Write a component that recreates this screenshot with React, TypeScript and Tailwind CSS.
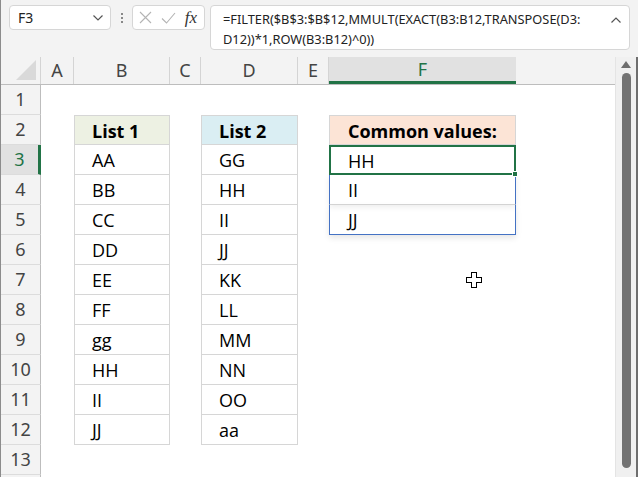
import React from 'react';

// column widths in px: row header, A..F, then spare area
const COLS = [
    { key: 'A', w: 'w-[33px]' },
    { key: 'B', w: 'w-[96px]' },
    { key: 'C', w: 'w-[31px]' },
    { key: 'D', w: 'w-[97px]' },
    { key: 'E', w: 'w-[31px]' },
    { key: 'F', w: 'w-[187px]' },
];

const LIST1 = ['AA', 'BB', 'CC', 'DD', 'EE', 'FF', 'gg', 'HH', 'II', 'JJ'];
const LIST2 = ['GG', 'HH', 'II', 'JJ', 'KK', 'LL', 'MM', 'NN', 'OO', 'aa'];
const COMMON = ['HH', 'II', 'JJ'];

const cellFont = { fontFamily: '"Open Sans", "Noto Sans", sans-serif' };
const uiFont = { fontFamily: '"Noto Sans", "Open Sans", sans-serif' };

function TopBar() {
    return (
        <div className="h-[57px] flex items-start pt-[5px] pl-[8px] gap-0 text-[#222]" style={uiFont}>
            {/* name box */}
            <div className="w-[102px] h-[25px] bg-white border border-[#d6d6d6] rounded-[4px] flex items-center justify-between pl-[8px] pr-[6px] text-[14px]">
                <span>F3</span>
                <svg width="12" height="8" viewBox="0 0 12 8" fill="none" stroke="#555" strokeWidth="1.2">
                    <path d="M1.5 1.5 L6 6 L10.5 1.5" />
                </svg>
            </div>
            {/* dots */}
            <div className="w-[21px] h-[25px] flex flex-col items-center justify-center gap-[2px]">
                <span className="w-[2px] h-[2px] bg-[#888]" />
                <span className="w-[2px] h-[2px] bg-[#888]" />
                <span className="w-[2px] h-[2px] bg-[#888]" />
            </div>
            {/* cancel / enter / fx */}
            <div className="w-[73px] h-[25px] bg-white border border-[#d6d6d6] rounded-[4px] flex items-center justify-between px-[6px]">
                <svg width="13" height="13" viewBox="0 0 13 13" fill="none" stroke="#b4b4b4" strokeWidth="1.1">
                    <path d="M1 1 L12 12 M12 1 L1 12" />
                </svg>
                <svg width="15" height="12" viewBox="0 0 15 12" fill="none" stroke="#b4b4b4" strokeWidth="1.1">
                    <path d="M1 6.5 L5.5 11 L14 1" />
                </svg>
                <span className="italic text-[17px] leading-none text-[#333] pr-[1px]" style={{ fontFamily: '"Liberation Serif", "DejaVu Serif", serif' }}>
                    fx
                </span>
            </div>
            {/* formula */}
            <div className="ml-[5px] w-[420px] h-[45px] bg-white border border-[#d6d6d6] rounded-[4px] relative pl-[12px] pt-[3px] text-[12.8px] leading-[20px] text-[#222]">
                <div>=FILTER($B$3:$B$12,MMULT(EXACT(B3:B12,TRANSPOSE(D3:</div>
                <div>D12))*1,ROW(B3:B12)^0))</div>
                <svg className="absolute right-[7px] top-[10px]" width="12" height="8" viewBox="0 0 12 8" fill="none" stroke="#555" strokeWidth="1.2">
                    <path d="M1.5 6.5 L6 2 L10.5 6.5" />
                </svg>
            </div>
        </div>
    );
}

function HeaderRow() {
    return (
        <div className="flex h-[28px] border-b border-[#bdbdbd]" style={uiFont}>
            <div className="w-[40px] border-r border-[#d4d4d4] flex items-end justify-end p-[4px]">
                <svg width="20" height="20" viewBox="0 0 20 20">
                    <path d="M20 0 L20 20 L0 20 Z" fill="#d9d9d9" />
                </svg>
            </div>
            {COLS.map(c => (
                <div
                    key={c.key}
                    className={`${c.w} flex items-center justify-center text-[18px] ${c.key === 'F' ? 'bg-[#e1e1e1] text-[#217346] border-b-[3px] border-[#217346]' : 'text-[#444] border-r border-[#d4d4d4]'}`}
                >
                    {c.key}
                </div>
            ))}
            <div className="flex-1" />
        </div>
    );
}

function RowHead({ n }: { n: number }) {
    const sel = n === 3;
    return (
        <div
            className={`w-[40px] shrink-0 h-full flex items-center justify-center text-[18px] border-b border-[#dcdcdc] ${sel ? 'bg-[#e1e1e1] text-[#217346] border-r-[3px] border-r-[#217346]' : 'bg-[#f3f3f3] text-[#444] border-r border-r-[#bdbdbd]'}`}
            style={uiFont}
        >
            {n}
        </div>
    );
}

function ListCell({ text, head, bg, first, w }: { text?: string; head?: boolean; bg?: string; first?: boolean; w: string }) {
    if (text === undefined) return <div className={`${w} shrink-0`} />;
    return (
        <div
            className={`${w} shrink-0 h-full border-x border-b border-[#d6d6d6] ${first ? 'border-t' : ''} ${bg ?? ''} ${head ? 'font-bold' : ''} flex items-center pl-[17px] pt-[2px] text-[18px] text-black`}
            style={cellFont}
        >
            {text}
        </div>
    );
}

function FCell({ row }: { row: number }) {
    const base = 'w-[187px] shrink-0 h-full flex items-center pt-[2px] text-[18px] text-black';
    if (row === 2)
        return (
            <div className={`${base} pl-[18px] bg-[#fce4d6] border border-[#d6d6d6] font-bold`} style={cellFont}>
                Common values:
            </div>
        );
    if (row === 3)
        return (
            <div className={`${base} pl-[17px] relative border-2 border-[#217346] bg-white`} style={cellFont}>
                {COMMON[0]}
                <span className="absolute right-[-4px] bottom-[-4px] w-[6px] h-[6px] bg-[#217346] border border-white" />
            </div>
        );
    if (row === 4)
        return (
            <div className={`${base} pl-[18px] border-x border-[#4472c4] border-b border-b-[#d6d6d6] shadow-[0_2px_6px_rgba(0,0,0,0.08)]`} style={cellFont}>
                {COMMON[1]}
            </div>
        );
    if (row === 5)
        return (
            <div className={`${base} pl-[18px] border-x border-b border-[#4472c4] shadow-[0_3px_6px_rgba(0,0,0,0.1)]`} style={cellFont}>
                {COMMON[2]}
            </div>
        );
    return <div className="w-[187px] shrink-0" />;
}

function Row({ n }: { n: number }) {
    const i = n - 3;
    return (
        <div className="flex h-[30px]">
            <RowHead n={n} />
            <div className="w-[33px] shrink-0" />
            <ListCell
                w="w-[96px]"
                text={n === 2 ? 'List 1' : n >= 3 && n <= 12 ? LIST1[i] : undefined}
                head={n === 2}
                first={n === 2}
                bg={n === 2 ? 'bg-[#edf1e3]' : undefined}
            />
            <div className="w-[31px] shrink-0" />
            <ListCell
                w="w-[97px]"
                text={n === 2 ? 'List 2' : n >= 3 && n <= 12 ? LIST2[i] : undefined}
                head={n === 2}
                first={n === 2}
                bg={n === 2 ? 'bg-[#daeef3]' : undefined}
            />
            <div className="w-[31px] shrink-0" />
            <FCell row={n} />
            <div className="flex-1" />
        </div>
    );
}

function ScrollBar() {
    return (
        <div className="w-[23px] h-full bg-[#f0f0f0] border-l border-[#e4e4e4] border-r-2 border-r-[#6e6e6e] flex flex-col items-center pt-[4px]">
            <svg width="10" height="7" viewBox="0 0 10 7">
                <path d="M5 0 L10 7 L0 7 Z" fill="#6e6e6e" />
            </svg>
            <div className="mt-[5px] w-[9px] h-[395px] rounded-full bg-[#737373]" />
        </div>
    );
}

export default function App() {
    const rows = Array.from({ length: 13 }, (_, k) => k + 1);
    return (
        <div className="w-[638px] h-[477px] overflow-hidden bg-[#f3f3f3] border-l border-[#8c8c8c] flex flex-col relative">
            <TopBar />
            <div className="flex flex-1 min-h-0">
                <div className="w-[614px] flex flex-col bg-white">
                    <div className="bg-[#f3f3f3]">
                        <HeaderRow />
                    </div>
                    {rows.map(n => (
                        <Row key={n} n={n} />
                    ))}
                    <div className="flex flex-1">
                        <div className="w-[40px] bg-[#f3f3f3] border-r border-[#bdbdbd]" />
                    </div>
                </div>
                <ScrollBar />
            </div>
            {/* mouse cursor */}
            <svg className="absolute left-[465px] top-[272px]" width="16" height="16" viewBox="0 0 16 16" shapeRendering="crispEdges">
                <path d="M5.5 0.5 H10.5 V5.5 H15.5 V10.5 H10.5 V15.5 H5.5 V10.5 H0.5 V5.5 H5.5 Z" fill="#fff" stroke="#000" />
            </svg>
        </div>
    );
}
